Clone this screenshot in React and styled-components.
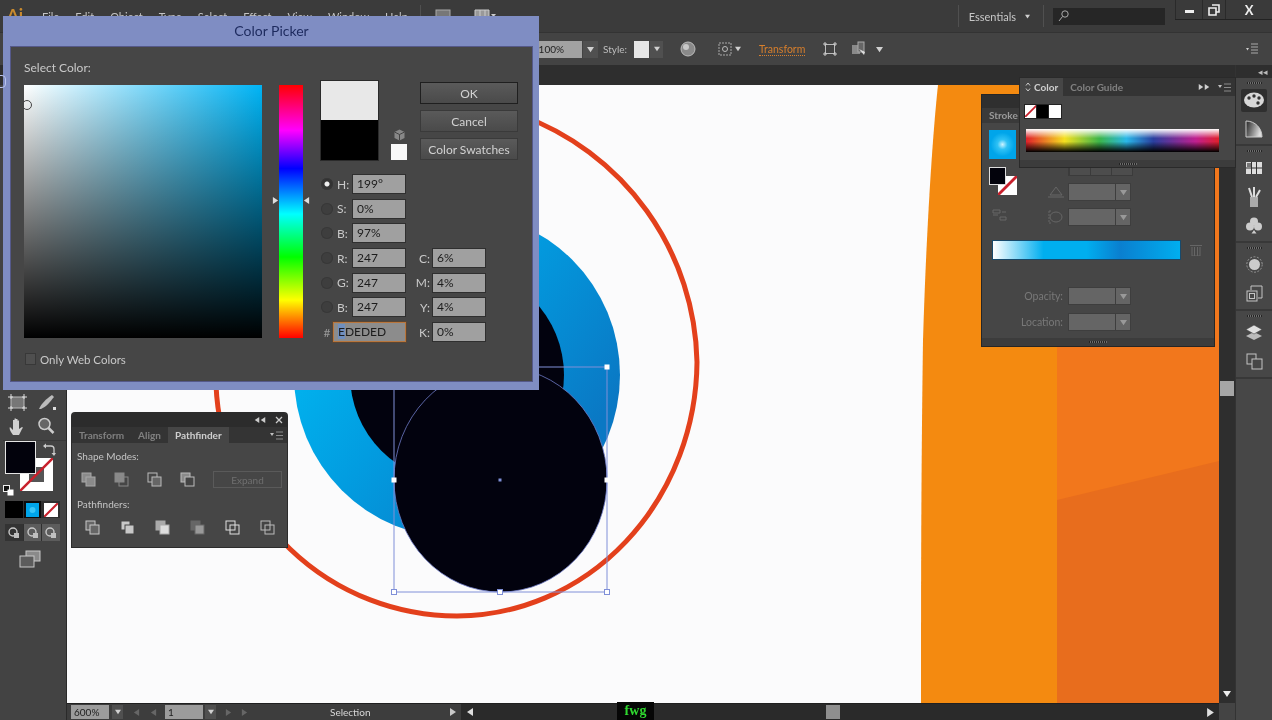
import React from 'react'
import styled, { createGlobalStyle } from 'styled-components'

const GlobalStyle = createGlobalStyle`
  html, body { margin: 0; padding: 0; background: #3a3a3a; }
  body { font-family: Lato, "Open Sans", sans-serif; }
`

const Shell = styled.div`
  position: relative;
  width: 1272px;
  height: 720px;
  overflow: hidden;
  background: #3f3f3f;
  filter: blur(0.5px);
  font-family: Lato, "Open Sans", sans-serif;
`
const Svg = styled.svg`
  display: block;
  flex: none;
`
const Spacer = styled.span`
  flex: ${p => (p.$w ? 'none' : 1)};
  width: ${p => p.$w || 0}px;
`
const Pair = styled.span`
  display: flex;
`

/* top bars */
const MenuBar = styled.div`
  display: flex;
  align-items: center;
  height: 32px;
  background: #3b3b3b;
  color: #c4c4c4;
  font-size: 11px;
`
const AiLogo = styled.span`
  width: 42px;
  padding-left: 7px;
  margin-top: -4px;
  box-sizing: border-box;
  color: #c98a2e;
  font-weight: 700;
  font-size: 17px;
`
const MenuList = styled.div`
  display: flex;
  gap: 16px;
`
const MenuSep = styled.span`
  width: 1px;
  height: 22px;
  margin: ${p => p.$m || '0 12px'};
  background: #505050;
`
const Workspace = styled.span`
  font-size: 11px;
  color: #c8c8c8;
`
const WorkspaceArrow = styled.span`
  margin-left: 9px;
`
const SearchBox = styled.div`
  width: 112px;
  height: 17px;
  margin-left: 9px;
  padding-left: 5px;
  box-sizing: border-box;
  background: #262626;
  display: flex;
  align-items: center;
`
const WinButtons = styled.div`
  display: flex;
  align-self: flex-start;
  height: 19px;
  margin-left: 10px;
  background: #3a3a3a;
  box-shadow: 0 1px 0 #222;
`
const WinButton = styled.div`
  width: ${p => p.$w}px;
  display: flex;
  align-items: center;
  justify-content: center;
  border-left: 1px solid #2a2a2a;
  box-sizing: border-box;
  color: #eee;
  font-weight: 700;
  font-size: 13px;
`
const ControlBar = styled.div`
  display: flex;
  align-items: center;
  height: 33px;
  padding-left: 530px;
  box-sizing: border-box;
  background: #434343;
  border-top: 1px solid #333;
  color: #bdbdbd;
  font-size: 10px;
`
const OpacityField = styled.div`
  width: 52px;
  height: 17px;
  line-height: 17px;
  text-align: right;
  padding-right: 18px;
  box-sizing: border-box;
  background: #a2a2a2;
  color: #222;
`
const DropButton = styled.div`
  width: ${p => p.$w || 15}px;
  height: ${p => p.$h || 17}px;
  margin-left: ${p => p.$ml || 1}px;
  background: #505050;
  display: flex;
  align-items: center;
  justify-content: center;
  flex: none;
`
const StyleLabel = styled.span`
  margin: 0 8px 0 5px;
  width: 23px;
`
const StyleSwatch = styled.div`
  width: 15px;
  height: 17px;
  background: #e6e6e6;
`
const BarIcon = styled.div`
  margin-left: ${p => p.$ml}px;
  margin-right: ${p => p.$mr || 0}px;
  display: flex;
  align-items: center;
  gap: 3px;
`
const TransformLink = styled.span`
  margin-left: 18px;
  color: #d87f2c;
  border-bottom: 1px dotted #d87f2c;
  font-size: 10.5px;
`

/* main area */
const Main = styled.div`
  display: flex;
  height: 655px;
`
const Middle = styled.div`
  width: 1235px;
  display: flex;
  flex-direction: column;
`
const DocStrip = styled.div`
  height: 20px;
  background: #2e2e2e;
`
const MiddleRow = styled.div`
  flex: 1;
  display: flex;
  min-height: 0;
`
const ToolColumn = styled.div`
  width: 67px;
  flex: none;
  padding: 305px 0 0 3px;
  box-sizing: border-box;
  background: #434343;
  border-right: 1px solid #2a2a2a;
`
const ToolGrid = styled.div`
  display: grid;
  grid-template-columns: 29px 29px;
  grid-auto-rows: 24px;
  justify-items: center;
  align-items: center;
  padding-bottom: 2px;
  border-bottom: 1px solid #383838;
`
const FillStack = styled.div`
  position: relative;
  height: 50px;
`
const FillBox = styled.div`
  position: absolute;
  left: 2px;
  top: 0;
  width: 29px;
  height: 31px;
  background: #02020c;
  border: 1px solid #e4e4e4;
  z-index: 1;
`
const StrokeBox = styled.div`
  position: absolute;
  left: 17px;
  top: 17px;
  width: 33px;
  height: 33px;
`
const SwapIcon = styled.div`
  position: absolute;
  left: 40px;
  top: -1px;
`
const DefaultIcon = styled.div`
  position: absolute;
  left: 0;
  top: 39px;
`
const ModeRow = styled.div`
  display: flex;
  width: 55px;
  height: 17px;
  margin: ${p => p.$mt}px 0 0 2px;
  background: ${p => p.$bg || '#333'};
  gap: 1px;
`
const ModeCell = styled.div`
  flex: 1;
  display: flex;
  align-items: center;
  justify-content: center;
  background: ${p => p.$bg || 'transparent'};
`
const ScreenMode = styled.div`
  display: flex;
  justify-content: center;
  width: 49px;
  margin: 9px 0 0 2px;
`
const CanvasColumn = styled.div`
  flex: 1;
  display: flex;
  flex-direction: column;
  min-width: 0;
`
const Canvas = styled.div`
  position: relative;
  flex: 1;
  background: #fbfbfc;
  overflow: hidden;
`
const Artwork = styled.svg`
  position: absolute;
  inset: 0;
  width: 100%;
  height: 100%;
`
const VScroll = styled.div`
  width: 16px;
  flex: none;
  display: flex;
  flex-direction: column;
  align-items: center;
  background: #2e2e2e;
`
const VThumb = styled.div`
  width: 14px;
  height: 15px;
  margin-top: 296px;
  background: #a6a6a6;
`
const VDown = styled.div`
  margin-top: auto;
  margin-bottom: 5px;
`
const VCorner = styled.div`
  width: 16px;
  height: 17px;
  background: #444;
`
const StatusBar = styled.div`
  height: 17px;
  display: flex;
  background: #3d3d3d;
  border-top: 1px solid #202020;
  box-sizing: border-box;
  color: #cfcfcf;
  font-size: 10px;
`
const StatusLeft = styled.div`
  width: 394px;
  flex: none;
  display: flex;
  align-items: center;
  padding-left: 4px;
  box-sizing: border-box;
`
const StatusField = styled.div`
  width: 38px;
  height: 14px;
  margin-left: ${p => p.$ml || 0}px;
  line-height: 14px;
  padding-left: 3px;
  box-sizing: border-box;
  background: #9c9c9c;
  color: #1d1d1d;
`
const StatusArrow = styled.div`
  margin-left: ${p => (p.$auto ? 'auto' : `${p.$ml || 0}px`)};
  display: flex;
  align-items: center;
  flex: none;
`
const StatusText = styled.span`
  margin-left: ${p => p.$ml}px;
  width: 60px;
  color: #d8d8d8;
`
const StatusTrack = styled.div`
  position: relative;
  flex: 1;
  display: flex;
  align-items: center;
  background: #2a2a2a;
  padding: 0 4px 0 5px;
`
const HThumb = styled.div`
  width: 14px;
  height: 14px;
  margin-left: 352px;
  background: #8f8f8f;
`
const FwgBadge = styled.div`
  position: absolute;
  left: 156px;
  top: -2px;
  width: 37px;
  height: 19px;
  background: #060606;
  color: #2fd82f;
  font: 700 14px/17px "Liberation Serif", serif;
  text-align: center;
`
const Dock = styled.div`
  width: 37px;
  flex: none;
  display: flex;
  flex-direction: column;
  background: #474747;
  border-left: 1px solid #333;
  box-sizing: border-box;
`
const DockTop = styled.div`
  height: 13px;
  background: #2e2e2e;
  color: #bbb;
  font-size: 9px;
  line-height: 13px;
  text-align: right;
  padding-right: 4px;
`
const DockGroup = styled.div`
  border-bottom: 2px solid #383838;
  padding-bottom: 1px;
`
const Grip = styled.div`
  width: ${p => p.$w || 15}px;
  height: 2px;
  margin: ${p => p.$m || '4px auto 2px'};
  background-image: repeating-linear-gradient(90deg, #1c1c1c 0 1px, #777 1px 2px);
  opacity: 0.8;
`
const DockSlot = styled.div`
  height: 28.5px;
  display: flex;
  align-items: center;
  justify-content: center;
`
const ActiveSlot = styled.div`
  width: 26px;
  height: 23px;
  background: #2f2f2f;
  display: flex;
  align-items: center;
  justify-content: center;
  border-radius: 2px;
`

/* floating panels */
const GradientPanel = styled.div`
  position: absolute;
  left: 982px;
  top: 95px;
  width: 232px;
  height: 251px;
  display: flex;
  flex-direction: column;
  background: #464646;
  box-shadow: 0 0 0 1px #262626;
  z-index: 2;
`
const PanelHead = styled.div`
  height: 13px;
  background: #2f2f2f;
`
const StrokeTabs = styled.div`
  height: 15px;
  background: #3a3a3a;
  color: #9a9a9a;
  font-size: 10px;
  font-weight: 700;
  line-height: 15px;
  padding-left: 7px;
`
const GradientBody = styled.div`
  padding: 7px 0 0 7px;
`
const GradTop = styled.div`
  display: flex;
`
const GradSide = styled.div`
  width: 27px;
  flex: none;
`
const GradSwatch = styled.div`
  width: 27px;
  height: 29px;
  background: radial-gradient(circle, #cdf3ff 0, #2fc2f5 25%, #00a5ea 60%);
`
const MiniStack = styled.div`
  position: relative;
  height: 28px;
  margin-top: 8px;
`
const MiniFill = styled.div`
  position: absolute;
  left: 0;
  top: 0;
  width: 15px;
  height: 16px;
  background: #03030c;
  border: 1px solid #ddd;
  z-index: 1;
`
const MiniStroke = styled.div`
  position: absolute;
  left: 9px;
  top: 9px;
`
const FaintIcon = styled.div`
  margin: 10px 0 0 3px;
`
const GradControls = styled.div`
  margin-left: 32px;
  padding-top: 30px;
`
const StrokeButtons = styled.div`
  display: flex;
  width: 65px;
  height: 16px;
  margin-left: 20px;
  border: 1px solid #3b3b3b;
  box-sizing: border-box;
`
const StrokeBtn = styled.div`
  flex: 1;
  border-left: 1px solid #3b3b3b;
  background: #4d4d4d;
`
const FadedRow = styled.div`
  display: flex;
  align-items: center;
  margin-top: ${p => p.$mt}px;
  gap: ${p => p.$gap || 4}px;
`
const FadedSelect = styled.div`
  width: 63px;
  height: 18px;
  display: flex;
  background: #656565;
  border: 1px solid #3e3e3e;
  box-sizing: border-box;
  flex: none;
`
const FadedArrow = styled.div`
  width: 14px;
  margin-left: auto;
  border-left: 1px solid #3e3e3e;
  display: flex;
  align-items: center;
  justify-content: center;
`
const GradientSlider = styled.div`
  width: 187px;
  height: 18px;
  margin-left: 4px;
  background: linear-gradient(90deg, #fff 0, #00aeef 27%, #00aeef 50%, #0a7fcf 68%, #00aeef 100%);
  box-shadow: 0 0 0 1px #174a6c;
`
const SliderRow = styled.div`
  display: flex;
  align-items: center;
  gap: 10px;
  margin-top: 15px;
`
const FadedLabel = styled.span`
  width: 74px;
  text-align: right;
  color: #787878;
  font-size: 10.5px;
`
const PanelFoot = styled.div`
  margin-top: auto;
  height: 8px;
  background: #3c3c3c;
  display: flex;
  align-items: center;
`
const ColorPanel = styled.div`
  position: absolute;
  left: 1020px;
  top: 78px;
  width: 215px;
  height: 89px;
  background: #464646;
  box-shadow: 0 0 0 1px #2a2a2a;
  display: flex;
  flex-direction: column;
  z-index: 3;
`
const TabRow = styled.div`
  display: flex;
  align-items: center;
  height: ${p => p.$h}px;
  background: #343434;
  font-size: 10px;
  flex: none;
`
const Tab = styled.div`
  height: 100%;
  padding: 0 ${p => p.$pad || 7}px;
  display: flex;
  align-items: center;
  color: ${p => (p.$active ? '#cfcfcf' : '#808080')};
  background: ${p => (p.$active ? '#464646' : 'transparent')};
  font-weight: 700;
`
const TabTools = styled.div`
  margin-left: auto;
  display: flex;
  align-items: center;
  gap: 8px;
  padding-right: 4px;
`
const SortArrows = styled.svg`
  display: block;
  margin-right: 3px;
`
const SwatchRow = styled.div`
  display: flex;
  margin: 9px 0 0 5px;
  height: 13px;
`
const MiniSwatch = styled.div`
  width: 12px;
  height: 13px;
  background: ${p => p.$bg};
  box-shadow: 0 0 0 1px #222;
`
const Spectrum = styled.div`
  width: 193px;
  height: 23px;
  margin: 11px 0 0 6px;
  background:
    linear-gradient(180deg, #fff 0, rgba(255,255,255,0) 40%, rgba(0,0,0,0) 55%, #000 100%),
    linear-gradient(90deg, #e0202a 0, #f5e020 20%, #3cb54a 38%, #2ab8e8 52%, #2a3f9f 66%, #c0208f 88%, #e0202a 100%);
`
const ColorFoot = styled.div`
  margin-top: auto;
  height: 7px;
  background: #3c3c3c;
  display: flex;
  align-items: center;
`
const PathfinderPanel = styled.div`
  position: absolute;
  left: 72px;
  top: 413px;
  width: 215px;
  height: 134px;
  background: #464646;
  box-shadow: 0 0 0 1px #2c2c2c;
  border-radius: 3px 3px 0 0;
  z-index: 3;
`
const PanelTitleBar = styled.div`
  height: 14px;
  background: #2c2c2c;
  display: flex;
  justify-content: flex-end;
  align-items: center;
  gap: 9px;
  padding-right: 4px;
  border-radius: 3px 3px 0 0;
`
const SectionTitle = styled.div`
  margin: ${p => p.$m};
  height: 14px;
  line-height: 14px;
  color: #c4c4c4;
  font-size: 10px;
`
const ShapeRow = styled.div`
  display: flex;
  align-items: center;
  margin-left: ${p => p.$ml}px;
  gap: ${p => p.$gap}px;
`
const ExpandButton = styled.div`
  width: 71px;
  height: 17px;
  margin: 0 5px 0 auto;
  line-height: 16px;
  text-align: center;
  box-sizing: border-box;
  border: 1px solid #5a5a5a;
  color: #6f6f6f;
  font-size: 10px;
`

/* color picker dialog */
const Dialog = styled.div`
  position: absolute;
  left: 3px;
  top: 16px;
  width: 536px;
  height: 374px;
  padding: 0 6px 8px 7px;
  box-sizing: border-box;
  display: flex;
  flex-direction: column;
  background: #7f8dc3;
  z-index: 5;
`
const DialogTitle = styled.div`
  height: 30px;
  line-height: 30px;
  flex: none;
  text-align: center;
  color: #1d2a5e;
  font-size: 14px;
`
const DialogBody = styled.div`
  flex: 1;
  display: flex;
  padding: 14px 0 0 14px;
  background: #464646;
  box-shadow: inset 0 0 0 1px #55598a;
  color: #c9c9c9;
  font-size: 12px;
`
const PickerColumn = styled.div`
  width: 238px;
  flex: none;
`
const PickerLabel = styled.div`
  height: 16px;
  line-height: 16px;
  margin-bottom: 9px;
`
const ColorField = styled.div`
  position: relative;
  height: 253px;
  background:
    linear-gradient(to top, #000 0, rgba(0,0,0,0) 100%),
    linear-gradient(to right, #fff 0, #00b4f5 100%);
`
const FieldMarker = styled.div`
  position: absolute;
  left: -2px;
  top: 15px;
  width: 8px;
  height: 8px;
  border-radius: 50%;
  border: 1px solid #444;
`
const WebColors = styled.label`
  display: flex;
  align-items: center;
  gap: 4px;
  margin: 15px 0 0 1px;
  height: 12px;
  font-size: 11.5px;
`
const WebCheck = styled.span`
  width: 11px;
  height: 12px;
  box-sizing: border-box;
  background: #4f4f4f;
  border: 1px solid #383838;
`
const HueBar = styled.div`
  position: relative;
  width: 24px;
  height: 253px;
  flex: none;
  margin: 25px 0 0 17px;
  background: linear-gradient(180deg, #f00 0, #f0f 18%, #00f 33%, #0ff 51%, #0f0 68%, #ff0 85%, #f00 100%);
`
const HueArrow = styled.div`
  position: absolute;
  top: 112px;
  ${p => p.$side}: -7px;
`
const ValuesColumn = styled.div`
  margin: 21px 0 0 18px;
  flex: none;
`
const PreviewRow = styled.div`
  display: flex;
`
const Preview = styled.div`
  width: 57px;
  height: 79px;
  background: linear-gradient(180deg, #e8e8e8 0 39px, #000 39px);
  box-shadow: 0 0 0 1px #2b2b2b;
`
const GamutColumn = styled.div`
  width: 16px;
  height: 79px;
  margin-left: 13px;
  display: flex;
  flex-direction: column;
  justify-content: flex-end;
  align-items: center;
  gap: 3px;
`
const WebSwatch = styled.div`
  width: 16px;
  height: 16px;
  background: #f8f8f8;
`
const DialogButtons = styled.div`
  margin: 1px 0 0 13px;
  display: flex;
  flex-direction: column;
  gap: 6px;
`
const DialogButton = styled.div`
  width: 98px;
  height: 22px;
  line-height: 21px;
  text-align: center;
  box-sizing: border-box;
  background: linear-gradient(180deg, #5a5a5a, #4a4a4a);
  border: 1px solid ${p => (p.$primary ? '#1f1f1f' : '#3a3a3a')};
  color: #d2d2d2;
  font-size: 12px;
`
const ValueGrid = styled.div`
  margin-top: 15px;
  display: flex;
  flex-direction: column;
  gap: 6.7px;
`
const ValueRow = styled.div`
  display: flex;
  align-items: center;
  height: 18px;
`
const Radio = styled.span`
  width: 12px;
  height: 12px;
  flex: none;
  border-radius: 50%;
  background: ${p => (p.$on ? 'radial-gradient(circle, #eee 0 2px, #333 3px)' : '#3e3e3e')};
  box-shadow: inset 0 0 0 1px #383838;
`
const ValueLabel = styled.span`
  width: 16px;
  margin-left: 4px;
  font-size: 12px;
`
const ValueField = styled.div`
  width: 52px;
  height: 18px;
  flex: none;
  line-height: 18px;
  padding-left: 4px;
  box-sizing: border-box;
  background: #a0a0a0;
  box-shadow: 0 0 0 1px #2f2f2f;
  color: #1c1c1c;
  font-size: 12px;
`
const CmykLabel = styled.span`
  width: ${p => p.$w || 28}px;
  text-align: right;
  padding-right: 3px;
  box-sizing: border-box;
`
const HashMark = styled.span`
  width: 12px;
  text-align: center;
  color: #999;
  flex: none;
`
const HexField = styled.div`
  width: 73px;
  height: 20px;
  flex: none;
  line-height: 18px;
  padding-left: 4px;
  box-sizing: border-box;
  background: #8c8c8c;
  border: 1px solid #b9763c;
  box-shadow: 0 0 0 1px #5a4634;
  color: #1c1c1c;
  font-size: 12px;
`
const HexSelected = styled.span`
  background: #6f8fc0;
`
const CursorRing = styled.div`
  position: absolute;
  left: -5px;
  top: 75px;
  width: 9px;
  height: 11px;
  border: 1px solid #b9c4ee;
  border-radius: 4px;
  z-index: 6;
`

const menuItems = ['File', 'Edit', 'Object', 'Type', 'Select', 'Effect', 'View', 'Window', 'Help']
const hsbRows = [
  { label: 'H:', value: '199°', on: true },
  { label: 'S:', value: '0%' },
  { label: 'B:', value: '97%' },
]
const rgbRows = [
  { label: 'R:', value: '247', c: 'C:', cv: '6%' },
  { label: 'G:', value: '247', c: 'M:', cv: '4%' },
  { label: 'B:', value: '247', c: 'Y:', cv: '4%' },
]

const Tri = ({ dir = 'down', size = 7, color = '#d0d0d0' }) => {
  const pts = {
    down: '0,1 8,1 4,7',
    right: '1,0 7,4 1,8',
    left: '7,0 1,4 7,8',
  }
  return (
    <Svg width={size} height={size} viewBox="0 0 8 8">
      <polygon points={pts[dir]} fill={color} />
    </Svg>
  )
}

const PanelMenu = () => (
  <svg width="13" height="9" viewBox="0 0 13 9">
    <polygon points="0,2 4,2 2,5" fill="#c0c0c0" />
    <path d="M6 1h7M6 4.5h7M6 8h7" stroke="#8a8a8a" strokeWidth="1.2" />
  </svg>
)

const NoneSwatch = ({ size = 17, bg = '#fff' }) => (
  <Svg width={size} height={size} viewBox="0 0 20 20">
    <rect width="20" height="20" fill={bg} />
    <path d="M0 20L20 0" stroke="#c8202c" strokeWidth="3" />
  </Svg>
)

const Overlap = ({ a = 'none', b = 'none', c = '#c6c6c6' }) => (
  <Svg width="15" height="15" viewBox="0 0 15 15">
    <rect x="1" y="1" width="9" height="9" fill={a} stroke={c} />
    <rect x="5" y="5" width="9" height="9" fill={b} stroke={c} />
  </Svg>
)

const ScreenIcon = () => (
  <svg width="22" height="18" viewBox="0 0 22 18">
    <rect x="7" y="1" width="14" height="10" fill="#8a8a8a" stroke="#c8c8c8" />
    <rect x="1" y="6" width="14" height="11" fill="#5c5c5c" stroke="#c8c8c8" />
  </svg>
)

const Art = () => (
  <Artwork viewBox="67 85 1152 618" preserveAspectRatio="none">
    <defs>
      <linearGradient id="ringBlue" x1="0" y1="0.35" x2="0.75" y2="0.9">
        <stop offset="0" stopColor="#00b8f2" />
        <stop offset="0.45" stopColor="#029ce0" />
        <stop offset="1" stopColor="#0a78c4" />
      </linearGradient>
    </defs>
    <path d="M938 85 C932 140 926 240 923 340 C921 480 921 600 921 703 L1219 703 L1219 85 Z" fill="#f48a10" />
    <path d="M1057 85 H1219 V703 H1057 Z" fill="#f2771c" />
    <path d="M1057 500 L1219 461 V703 H1057 Z" fill="#e86d1d" />
    <path d="M520 115 A 268 268 0 0 1 697 362 A 241 256 0 0 1 457 616 A 241 241 0 0 1 216 385" fill="none" stroke="#e3401c" strokeWidth="5" />
    <circle cx="457" cy="375" r="163" fill="url(#ringBlue)" />
    <circle cx="457" cy="375" r="107" fill="#02020e" />
    <ellipse cx="500.5" cy="479.5" rx="106.5" ry="112.5" fill="#02020e" stroke="#6f7bc8" strokeWidth="0.8" />
    <rect x="394" y="367" width="213" height="225" fill="none" stroke="#8090d8" strokeWidth="1" />
    {[[394, 480], [607, 480], [607, 367]].map(([x, y]) => (
      <rect key={x + '-' + y} x={x - 2.5} y={y - 2.5} width="5" height="5" fill="#fff" />
    ))}
    {[[394, 592], [500, 592], [607, 592]].map(([x, y]) => (
      <rect key={x} x={x - 2.5} y={y - 2.5} width="5" height="5" fill="#fff" stroke="#7f8fd8" />
    ))}
    <rect x="498.5" y="478.5" width="3" height="3" fill="#7f8fd8" />
  </Artwork>
)

function App() {
  return (
    <Shell>
      <GlobalStyle />
      <MenuBar>
        <AiLogo>Ai</AiLogo>
        <MenuList>
          {menuItems.map(m => <span key={m}>{m}</span>)}
        </MenuList>
        <Spacer $w={12} />
        <MenuSep $m="0 14px 0 0" />
        <svg width="16" height="14" viewBox="0 0 16 14"><rect x="1" y="1" width="14" height="12" fill="#777" stroke="#aaa" /></svg>
        <Spacer $w={23} />
        <svg width="22" height="14" viewBox="0 0 22 14"><path d="M1 1h14v12H1zM6 1v12M11 1v12" fill="#999" stroke="#ccc" /><polygon points="17,5 22,5 19.5,8" fill="#ccc" /></svg>
        <Spacer />
        <MenuSep $m="0 10px 0 0" />
        <Workspace>Essentials</Workspace>
        <WorkspaceArrow><Tri size={5} /></WorkspaceArrow>
        <MenuSep $m="0 0 0 13px" />
        <SearchBox>
          <svg width="11" height="12" viewBox="0 0 11 12"><circle cx="7" cy="4" r="3.2" fill="none" stroke="#aaa" /><path d="M4.5 6.5L1 11" stroke="#aaa" /></svg>
        </SearchBox>
        <WinButtons>
          <WinButton $w={27}>
            <svg width="9" height="9" viewBox="0 0 9 9"><rect y="5" width="9" height="3" fill="#eee" /></svg>
          </WinButton>
          <WinButton $w={23}>
            <svg width="12" height="12" viewBox="0 0 12 12"><path d="M4 1h7v7H8M1 4h7v7H1z" fill="none" stroke="#eee" strokeWidth="1.6" /></svg>
          </WinButton>
          <WinButton $w={47}>X</WinButton>
        </WinButtons>
      </MenuBar>

      <ControlBar>
        <OpacityField>100%</OpacityField>
        <DropButton><Tri /></DropButton>
        <StyleLabel>Style:</StyleLabel>
        <StyleSwatch />
        <DropButton $w={13}><Tri size={6} /></DropButton>
        <BarIcon $ml={17}>
          <svg width="16" height="16" viewBox="0 0 16 16"><circle cx="8" cy="8" r="7" fill="#8a8a8a" stroke="#bbb" /><circle cx="6" cy="6" r="3" fill="#c8c8c8" /></svg>
        </BarIcon>
        <BarIcon $ml={22}>
          <svg width="14" height="14" viewBox="0 0 14 14"><rect x="1" y="1" width="12" height="12" fill="none" stroke="#aaa" strokeDasharray="2 1" /><circle cx="7" cy="7" r="2.5" fill="none" stroke="#bbb" /></svg>
          <Tri size={6} />
        </BarIcon>
        <TransformLink>Transform</TransformLink>
        <BarIcon $ml={18}>
          <svg width="14" height="14" viewBox="0 0 14 14"><rect x="2.5" y="2.5" width="9" height="9" fill="none" stroke="#bbb" /><path d="M0 2h4M2 0v4M10 2h4M12 0v4M0 12h4M2 10v4M10 12h4M12 10v4" stroke="#ccc" /></svg>
        </BarIcon>
        <BarIcon $ml={14}>
          <svg width="16" height="16" viewBox="0 0 16 16"><rect x="1" y="4" width="8" height="9" fill="#8a8a8a" /><rect x="7" y="1" width="6" height="10" fill="#666" stroke="#aaa" /><path d="M8 8l5 6 1-3z" fill="#ddd" /></svg>
          <Spacer $w={3} />
          <Tri />
        </BarIcon>
        <Spacer />
        <BarIcon $ml={0} $mr={14}>
          <svg width="12" height="12" viewBox="0 0 12 12"><polygon points="0,5 3,5 1.5,7.5" fill="#ccc" /><path d="M5 1h7M5 4h7M5 7h7M5 10h7" stroke="#aaa" /></svg>
        </BarIcon>
      </ControlBar>

      <Main>
        <Middle>
          <DocStrip />
          <MiddleRow>
            <ToolColumn>
              <ToolGrid>
                <svg width="19" height="17" viewBox="0 0 19 17"><rect x="3" y="3" width="13" height="11" fill="#777" stroke="#bbb" /><path d="M0 3h5M3 0v5M14 3h5M16 0v5M0 14h5M3 12v5M14 14h5M16 12v5" stroke="#ddd" /></svg>
                <svg width="19" height="17" viewBox="0 0 19 17"><path d="M2 15C4 10 9 5 15 1l2 2C13 8 9 13 4 15z" fill="#bbb" /><rect x="16" y="13" width="3" height="3" fill="#ddd" /></svg>
                <svg width="19" height="19" viewBox="0 0 19 19"><path d="M5 18C2 14 1 11 2 10l3 3V3h1.5v6V1.5H8V9V2h1.5v7V3.5H11V12l3-2c1 0 1 1 0 2l-3 6z" fill="#d0d0d0" /></svg>
                <svg width="19" height="18" viewBox="0 0 19 18"><circle cx="7.5" cy="7" r="5.5" fill="#666" stroke="#ccc" strokeWidth="1.5" /><path d="M11.5 11l5 5" stroke="#ccc" strokeWidth="2.5" /></svg>
              </ToolGrid>
              <FillStack>
                <FillBox />
                <StrokeBox>
                  <Svg width="33" height="33" viewBox="0 0 33 33">
                    <rect width="33" height="33" fill="#fff" />
                    <rect x="9" y="9" width="15" height="15" fill="#555" />
                    <path d="M0 33L33 0" stroke="#c8202c" strokeWidth="2.5" />
                  </Svg>
                </StrokeBox>
                <SwapIcon>
                  <svg width="13" height="13" viewBox="0 0 13 13"><path d="M2 3h6c2 0 3 1 3 3v5" fill="none" stroke="#ccc" strokeWidth="1.3" /><polygon points="0,3 3,0.5 3,5.5" fill="#ccc" /><polygon points="11,13 8.5,10 13,10" fill="#ccc" /></svg>
                </SwapIcon>
                <DefaultIcon>
                  <svg width="11" height="11" viewBox="0 0 11 11"><rect x="0.5" y="0.5" width="6" height="6" fill="#111" stroke="#eee" /><rect x="4.5" y="4.5" width="6" height="6" fill="#fff" /></svg>
                </DefaultIcon>
              </FillStack>
              <ModeRow $mt={10} $bg="#2f2f2f">
                <ModeCell $bg="#000" />
                <ModeCell $bg="#0b0b0b">
                  <svg width="13" height="14" viewBox="0 0 13 14"><rect width="13" height="14" fill="#00a5ea" /><circle cx="6.5" cy="7" r="3" fill="#39c5f7" /></svg>
                </ModeCell>
                <ModeCell><NoneSwatch size={14} /></ModeCell>
              </ModeRow>
              <ModeRow $mt={6} $bg="#2f2f2f">
                {['#333', '#5c5c5c', '#5c5c5c'].map((bg, i) => (
                  <ModeCell key={i} $bg={bg}>
                    <svg width="12" height="12" viewBox="0 0 12 12"><circle cx="5" cy="5" r="4" fill="none" stroke="#c8c8c8" strokeWidth="1.4" /><rect x="6" y="6" width="5" height="5" fill="#c0c0c0" /></svg>
                  </ModeCell>
                ))}
              </ModeRow>
              <ScreenMode><ScreenIcon /></ScreenMode>
            </ToolColumn>

            <CanvasColumn>
              <Canvas><Art /></Canvas>
              <StatusBar>
                <StatusLeft>
                  <StatusField>600%</StatusField>
                  <DropButton $w={11} $h={14} $ml={3}><Tri size={6} /></DropButton>
                  <StatusArrow $ml={10}><Tri dir="left" size={7} color="#666" /></StatusArrow>
                  <StatusArrow $ml={10}><Tri dir="left" size={7} color="#666" /></StatusArrow>
                  <StatusField $ml={8}>1</StatusField>
                  <DropButton $w={11} $h={14} $ml={2}><Tri size={6} /></DropButton>
                  <StatusArrow $ml={9}><Tri dir="right" size={7} color="#666" /></StatusArrow>
                  <StatusArrow $ml={9}><Tri dir="right" size={7} color="#666" /></StatusArrow>
                  <StatusText $ml={82}>Selection</StatusText>
                  <StatusArrow $ml={59}><Tri dir="right" size={8} color="#c8c8c8" /></StatusArrow>
                </StatusLeft>
                <StatusTrack>
                  <Tri dir="left" size={8} color="#ddd" />
                  <FwgBadge>fwg</FwgBadge>
                  <HThumb />
                  <StatusArrow $auto><Tri dir="right" size={9} color="#e0e0e0" /></StatusArrow>
                </StatusTrack>
              </StatusBar>
            </CanvasColumn>

            <VScroll>
              <VThumb />
              <VDown><Tri size={8} color="#eee" /></VDown>
              <VCorner />
            </VScroll>
          </MiddleRow>
        </Middle>

        <Dock>
          <DockTop>◂◂</DockTop>
          <DockGroup>
            <Grip />
            <DockSlot>
              <ActiveSlot>
                <svg width="20" height="16" viewBox="0 0 20 16"><ellipse cx="10" cy="8" rx="10" ry="7.5" fill="#d8d8d8" /><circle cx="5" cy="6" r="1.7" fill="#333" /><circle cx="10" cy="4" r="1.7" fill="#333" /><circle cx="15" cy="6" r="1.7" fill="#333" /><circle cx="14" cy="11" r="1.7" fill="#333" /></svg>
              </ActiveSlot>
            </DockSlot>
            <DockSlot>
              <svg width="18" height="18" viewBox="0 0 18 18"><defs><linearGradient id="dockGrad" x1="0" y1="0" x2="1" y2="0.3"><stop offset="0" stopColor="#222" /><stop offset="1" stopColor="#ddd" /></linearGradient></defs><path d="M1 1C10 1 17 8 17 17H1z" fill="url(#dockGrad)" stroke="#ccc" /></svg>
            </DockSlot>
          </DockGroup>
          <DockGroup>
            <Grip />
            <DockSlot>
              <svg width="16" height="12" viewBox="0 0 16 12"><rect width="16" height="12" fill="#ddd" /><path d="M5.5 0v12M10.5 0v12M0 6h16" stroke="#333" /><rect x="1" y="1" width="4" height="4" fill="#777" /></svg>
            </DockSlot>
            <DockSlot>
              <svg width="14" height="22" viewBox="0 0 14 22"><rect x="3" y="11" width="8" height="10" fill="#aaa" /><path d="M5 11L2 2M7 11V1M9 11l4-7" stroke="#ddd" strokeWidth="2" /></svg>
            </DockSlot>
            <DockSlot>
              <svg width="16" height="17" viewBox="0 0 16 17"><circle cx="8" cy="4.5" r="4" fill="#ccc" /><circle cx="4" cy="9.5" r="4" fill="#ccc" /><circle cx="12" cy="9.5" r="4" fill="#ccc" /><path d="M8 7v6l2.5 3.5h-5L8 13" fill="#ccc" /></svg>
            </DockSlot>
          </DockGroup>
          <DockGroup>
            <Grip />
            <DockSlot>
              <svg width="17" height="17" viewBox="0 0 17 17"><circle cx="8.5" cy="8.5" r="5.5" fill="#ccc" /><circle cx="8.5" cy="8.5" r="7.7" fill="none" stroke="#999" strokeDasharray="2 1.5" /></svg>
            </DockSlot>
            <DockSlot>
              <svg width="17" height="17" viewBox="0 0 17 17"><path d="M5 5V1h11v12h-4" fill="none" stroke="#c4c4c4" /><rect x="1" y="6" width="10" height="10" fill="none" stroke="#c4c4c4" /><rect x="3.5" y="8.5" width="5" height="5" fill="none" stroke="#c4c4c4" /></svg>
            </DockSlot>
          </DockGroup>
          <DockGroup>
            <Grip />
            <DockSlot>
              <svg width="16" height="17" viewBox="0 0 16 17"><polygon points="8,8 16,12 8,16 0,12" fill="#bbb" /><polygon points="8,1 16,5.5 8,10 0,5.5" fill="#e0e0e0" stroke="#474747" strokeWidth="0.6" /></svg>
            </DockSlot>
            <DockSlot>
              <svg width="17" height="17" viewBox="0 0 17 17"><rect x="1" y="1" width="9" height="10" fill="none" stroke="#c4c4c4" /><rect x="6" y="6" width="10" height="10" fill="#474747" stroke="#c4c4c4" /></svg>
            </DockSlot>
          </DockGroup>
        </Dock>
      </Main>

      <GradientPanel>
        <PanelHead />
        <StrokeTabs>Stroke</StrokeTabs>
        <GradientBody>
          <GradTop>
            <GradSide>
              <GradSwatch />
              <MiniStack>
                <MiniFill />
                <MiniStroke><NoneSwatch size={19} /></MiniStroke>
              </MiniStack>
              <FaintIcon>
                <svg width="15" height="12" viewBox="0 0 15 12"><path d="M1 1h7v3H1zM8 8h6v3H8zM1 6h5M10 3h4" fill="none" stroke="#666" /></svg>
              </FaintIcon>
            </GradSide>
            <GradControls>
              <StrokeButtons><StrokeBtn /><StrokeBtn /><StrokeBtn /></StrokeButtons>
              <FadedRow $mt={7}>
                <svg width="16" height="12" viewBox="0 0 16 12"><path d="M8 1L14 9H2zM0 11h16" fill="none" stroke="#666" /></svg>
                <FadedSelect><FadedArrow><Tri size={7} color="#999" /></FadedArrow></FadedSelect>
              </FadedRow>
              <FadedRow $mt={7}>
                <svg width="16" height="14" viewBox="0 0 16 14"><ellipse cx="8" cy="7" rx="6" ry="5" fill="none" stroke="#666" /><path d="M1 1h3M1 13h3M1 1v12" stroke="#666" strokeDasharray="2 1" /></svg>
                <FadedSelect><FadedArrow><Tri size={7} color="#999" /></FadedArrow></FadedSelect>
              </FadedRow>
            </GradControls>
          </GradTop>
          <SliderRow>
            <GradientSlider />
            <svg width="12" height="12" viewBox="0 0 12 12"><path d="M0 1.5h12M2 3v9h8V3M4.5 3v9M7.5 3v9" fill="none" stroke="#666" /></svg>
          </SliderRow>
          <FadedRow $mt={28} $gap={5}>
            <FadedLabel>Opacity:</FadedLabel>
            <FadedSelect><FadedArrow><Tri size={7} color="#999" /></FadedArrow></FadedSelect>
          </FadedRow>
          <FadedRow $mt={8} $gap={5}>
            <FadedLabel>Location:</FadedLabel>
            <FadedSelect><FadedArrow><Tri size={7} color="#999" /></FadedArrow></FadedSelect>
          </FadedRow>
        </GradientBody>
        <PanelFoot><Grip $m="0 auto" $w={18} /></PanelFoot>
      </GradientPanel>

      <ColorPanel>
        <TabRow $h={18}>
          <Tab $active $pad={5}>
            <SortArrows width="6" height="10" viewBox="0 0 6 10"><path d="M1 3.5L3 1l2 2.5M1 6.5L3 9l2-2.500" fill="none" stroke="#ccc" /></SortArrows>
            Color
          </Tab>
          <Tab>Color Guide</Tab>
          <TabTools>
            <Pair><Tri dir="right" size={6} /><Tri dir="right" size={6} /></Pair>
            <PanelMenu />
          </TabTools>
        </TabRow>
        <SwatchRow>
          <MiniSwatch $bg="#fff"><NoneSwatch size={12} /></MiniSwatch>
          <MiniSwatch $bg="#000" />
          <MiniSwatch $bg="#fff" />
        </SwatchRow>
        <Spectrum />
        <ColorFoot><Grip $m="0 auto" $w={18} /></ColorFoot>
      </ColorPanel>

      <PathfinderPanel>
        <PanelTitleBar>
          <Pair><Tri dir="left" size={6} color="#ccc" /><Tri dir="left" size={6} color="#ccc" /></Pair>
          <svg width="8" height="8" viewBox="0 0 8 8"><path d="M1 1l6 6M7 1L1 7" stroke="#ccc" strokeWidth="1.3" /></svg>
        </PanelTitleBar>
        <TabRow $h={16}>
          <Tab>Transform</Tab>
          <Tab>Align</Tab>
          <Tab $active>Pathfinder</Tab>
          <TabTools><PanelMenu /></TabTools>
        </TabRow>
        <SectionTitle $m="6px 0 8px 5px">Shape Modes:</SectionTitle>
        <ShapeRow $ml={9} $gap={18}>
          <Overlap a="#8a8a8a" b="#8a8a8a" c="#a8a8a8" />
          <Overlap a="#8a8a8a" b="none" c="#888" />
          <Overlap a="none" b="#666" c="#bbb" />
          <Overlap a="#8a8a8a" b="#444" c="#bbb" />
          <ExpandButton>Expand</ExpandButton>
        </ShapeRow>
        <SectionTitle $m="9px 0 9px 5px">Pathfinders:</SectionTitle>
        <ShapeRow $ml={13} $gap={20}>
          <Overlap a="#666" b="#666" c="#c8c8c8" />
          <Overlap a="#c8c8c8" b="#c8c8c8" c="#444" />
          <Overlap a="#aaa" b="#ddd" c="#aaa" />
          <Overlap a="#666" b="#999" c="#666" />
          <Overlap a="none" b="none" c="#e0e0e0" />
          <Overlap a="#444" b="none" c="#bbb" />
        </ShapeRow>
      </PathfinderPanel>

      <CursorRing />

      <Dialog>
        <DialogTitle>Color Picker</DialogTitle>
        <DialogBody>
          <PickerColumn>
            <PickerLabel>Select Color:</PickerLabel>
            <ColorField><FieldMarker /></ColorField>
            <WebColors><WebCheck />Only Web Colors</WebColors>
          </PickerColumn>
          <HueBar>
            <HueArrow $side="left"><Tri dir="right" size={7} color="#ddd" /></HueArrow>
            <HueArrow $side="right"><Tri dir="left" size={7} color="#ddd" /></HueArrow>
          </HueBar>
          <ValuesColumn>
            <PreviewRow>
              <Preview />
              <GamutColumn>
                <svg width="11" height="12" viewBox="0 0 11 12"><path d="M5.5 0.5L10.5 3v6l-5 2.5L0.5 9V3z" fill="#888" /><path d="M0.5 3l5 2.5 5-2.5M5.5 5.5v6" stroke="#444" fill="none" /></svg>
                <WebSwatch />
              </GamutColumn>
              <DialogButtons>
                <DialogButton $primary>OK</DialogButton>
                <DialogButton>Cancel</DialogButton>
                <DialogButton>Color Swatches</DialogButton>
              </DialogButtons>
            </PreviewRow>
            <ValueGrid>
              {hsbRows.map(r => (
                <ValueRow key={r.label}>
                  <Radio $on={r.on} />
                  <ValueLabel>{r.label}</ValueLabel>
                  <ValueField>{r.value}</ValueField>
                </ValueRow>
              ))}
              {rgbRows.map(r => (
                <ValueRow key={r.label}>
                  <Radio />
                  <ValueLabel>{r.label}</ValueLabel>
                  <ValueField>{r.value}</ValueField>
                  <CmykLabel>{r.c}</CmykLabel>
                  <ValueField>{r.cv}</ValueField>
                </ValueRow>
              ))}
              <ValueRow>
                <HashMark>#</HashMark>
                <HexField><HexSelected>E</HexSelected>DEDED</HexField>
                <CmykLabel $w={27}>K:</CmykLabel>
                <ValueField>0%</ValueField>
              </ValueRow>
            </ValueGrid>
          </ValuesColumn>
        </DialogBody>
      </Dialog>
    </Shell>
  )
}

export default App
